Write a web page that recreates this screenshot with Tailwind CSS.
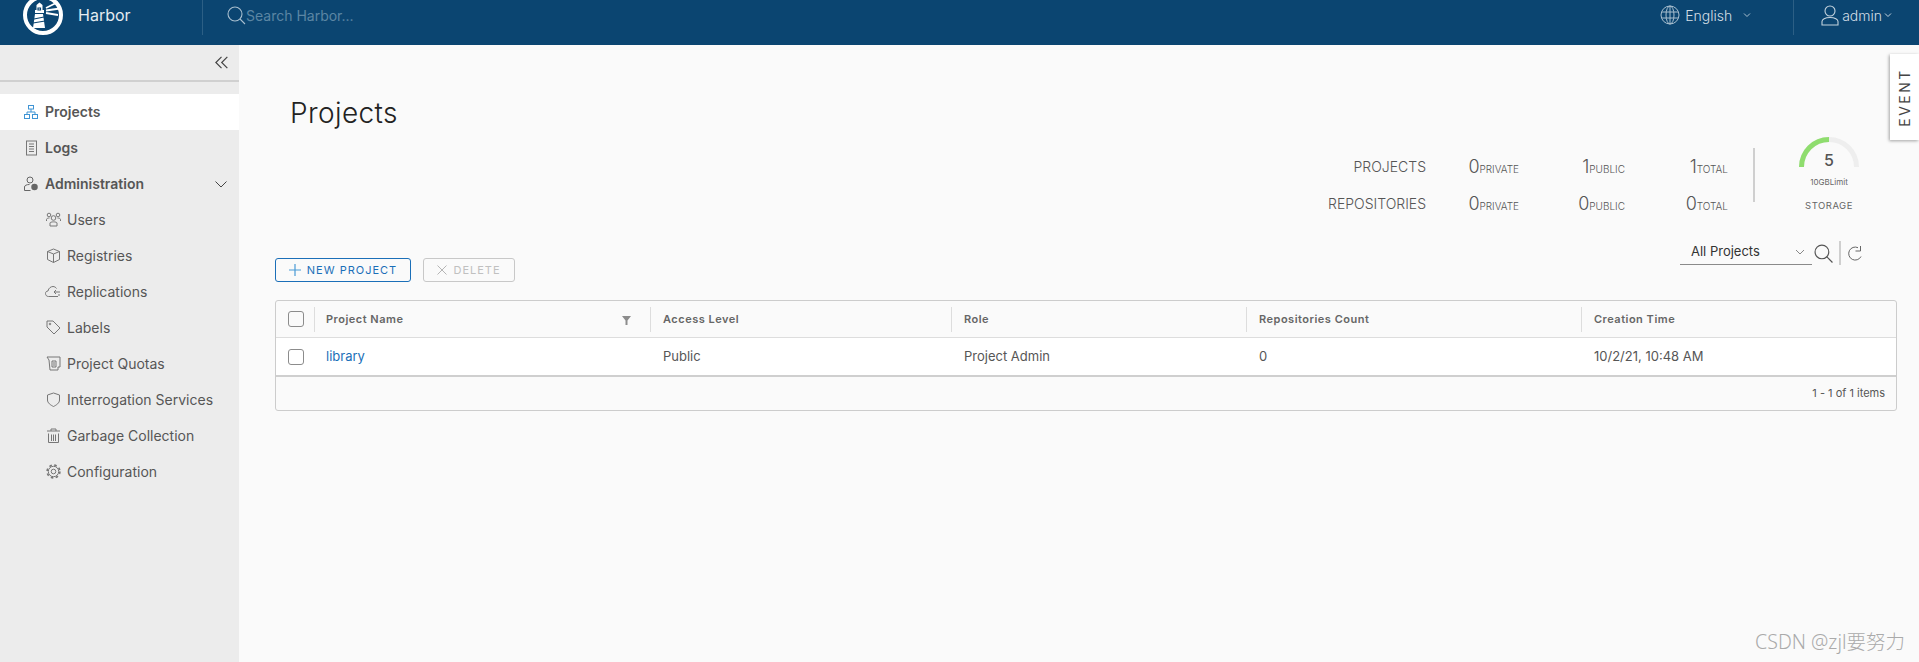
<!DOCTYPE html>
<html lang="en">
<head>
    <meta charset="UTF-8">
    <title>Harbor</title>
    <script src="https://cdn.jsdelivr.net/npm/@tailwindcss/browser@4"></script>
</head>
<body class="h-[662px] overflow-hidden flex flex-col bg-[#fafafa] text-[#565656] font-['Inter','Noto_Sans_CJK_SC',sans-serif]">
    <!-- Top bar -->
    <header class="h-[45px] shrink-0 flex items-center pb-[15px] bg-[#0b4571] text-[#d5dfe6] overflow-hidden">
        <svg class="ml-[23px] shrink-0" width="40" height="40" viewBox="0 0 40 40" fill="none">
            <circle cx="20" cy="20" r="18" stroke="#fff" stroke-width="4"/>
            <path d="M12 15h9v3h-9zM13.500 10l3-2.500 3 2.500v5h-6zM12 19h8l2 14h-12z" fill="#fff"/>
            <path d="M15 13h2.500v2h-2.500zM11 24l10-2M10 28l12-2" stroke="#0b4571" stroke-width="1.200"/>
            <path d="M23 13l12-6M23 15.500l14-2M23 18l12 2" stroke="#fff" stroke-width="1.800"/>
        </svg>
        <span class="ml-[15px] w-[124px] text-[16px] text-[#e4ebf0]">Harbor</span>
        <div class="h-[35px] w-px self-start bg-[#2c5f85]"></div>
        <svg class="ml-[24px] mt-[1px]" width="19" height="19" viewBox="0 0 19 19" fill="none" stroke="#a9bfcf" stroke-width="1.100"><circle cx="8" cy="8" r="7"/><path d="M13 13l5 5"/></svg>
        <span class="text-[14px] text-[#5b86a4]">Search Harbor...</span>
        <div class="ml-auto flex items-center h-full">
            <svg width="20" height="20" viewBox="0 0 20 20" fill="none" stroke="#a9bfcf" stroke-width="1"><circle cx="10" cy="10" r="9"/><ellipse cx="10" cy="10" rx="4" ry="9"/><path d="M10 1v18M1.800 7h16.400M1.800 13h16.400"/></svg>
            <span class="ml-[5px] text-[14px] font-light">English</span>
            <svg class="ml-[11px]" width="8" height="8" viewBox="0 0 8 8" fill="none" stroke="#a9bfcf"><path d="M1 2.500l3 3 3-3"/></svg>
            <div class="ml-[42px] h-[35px] w-px self-start bg-[#2c5f85]"></div>
            <svg class="ml-[27px]" width="18" height="21" viewBox="0 0 18 21" fill="none" stroke="#c4d3de" stroke-width="1.100"><circle cx="9" cy="6" r="5"/><path d="M1 20v-3.500c0-2 3-4 8-4s8 2 8 4V20z"/></svg>
            <span class="ml-[3px] text-[14px] font-light">admin</span>
            <svg class="ml-[2px] mr-[27px]" width="8" height="8" viewBox="0 0 8 8" fill="none" stroke="#c4d3de"><path d="M1 2.500l3 3 3-3"/></svg>
        </div>
    </header>

    <div class="flex flex-1 min-h-0">
        <!-- Sidebar -->
        <aside class="w-[239px] shrink-0 bg-[#ececec] text-[14px]">
            <div class="h-[37px] flex items-center justify-end pr-[11px] border-b-2 border-[#d0d0d0]">
                <svg width="13" height="13" viewBox="0 0 12 12" fill="none" stroke="#444" stroke-width="1.100"><path d="M6 .8L.8 6 6 11.200M11.400.8L6.200 6l5.200 5.200"/></svg>
            </div>
            <nav class="mt-[12px]">
                <a class="h-[36px] flex items-center pl-[24px] pb-[1px] gap-[7px] bg-white font-semibold">
                    <svg width="14" height="14" viewBox="0 0 14 14" fill="none" stroke="#3f94d4" stroke-width="1"><rect x="4.500" y=".5" width="5" height="3.500"/><rect x=".5" y="9.500" width="5" height="4"/><rect x="8.500" y="9.500" width="5" height="4"/><path d="M7 4v3M3 9.500V7h8v2.500"/></svg>
                    Projects
                </a>
                <a class="h-[36px] flex items-center pl-[24px] pb-[1px] gap-[7px] font-semibold">
                    <svg width="14" height="16" viewBox="0 0 14 16" fill="none" stroke="#777" stroke-width="1"><rect x="2.500" y="1" width="10" height="14"/><path d="M5 4h5M5 6.500h5M5 9h5M5 11.500h5"/></svg>
                    Logs
                </a>
                <a class="h-[36px] flex items-center pl-[24px] pb-[1px] pr-[12px] gap-[7px] font-semibold">
                    <svg width="14" height="16" viewBox="0 0 14 16" fill="none" stroke="#666" stroke-width="1"><circle cx="6" cy="4" r="3"/><path d="M.5 14.500V11c0-1.500 2-2.500 5-2.500"/><path d="M.5 14.500h6"/><circle cx="10.500" cy="11" r="2.500" fill="#666" stroke-width="1.500"/></svg>
                    Administration
                    <svg class="ml-auto" width="12" height="12" viewBox="0 0 12 12" fill="none" stroke="#444"><path d="M.5 3.500L6 9l5.500-5.500"/></svg>
                </a>
                <a class="h-[36px] flex items-center pl-[46px] pb-[1px] gap-[6px]">
                    <svg width="15" height="15" viewBox="0 0 15 15" fill="none" stroke="#777" stroke-width="1"><circle cx="7.500" cy="6" r="2.300"/><circle cx="3" cy="3" r="1.800"/><circle cx="12" cy="3" r="1.800"/><path d="M4 14v-3c0-1.500 7-1.500 7 0v3zM.5 9V7.500C.5 6.500 2 6 3.500 6M14.500 9V7.500c0-1-1.500-1.500-3-1.500"/></svg>
                    Users
                </a>
                <a class="h-[36px] flex items-center pl-[46px] pb-[1px] gap-[6px]">
                    <svg width="15" height="15" viewBox="0 0 15 15" fill="none" stroke="#777" stroke-width="1"><path d="M7.500 1l6 2.500v8l-6 3-6-3v-8zM1.500 3.500l6 2.500 6-2.500M7.500 6v8.500"/></svg>
                    Registries
                </a>
                <a class="h-[36px] flex items-center pl-[45px] pb-[1px] gap-[6px]">
                    <svg width="16" height="15" viewBox="0 0 16 15" fill="none" stroke="#777" stroke-width="1"><path d="M13 12.500H3.500C1.500 12.500.5 11 .5 9.500S1.500 7 3 7c.5-3 3-4.500 5-4.500 1.500 0 3 1 3.500 2"/><path d="M15 8H9l2-2M9 8l2 2M14 10v2"/></svg>
                    Replications
                </a>
                <a class="h-[36px] flex items-center pl-[46px] pb-[1px] gap-[6px]">
                    <svg width="15" height="15" viewBox="0 0 15 15" fill="none" stroke="#777" stroke-width="1"><path d="M1 1h6l7 7-6 6-7-7z"/><circle cx="4" cy="4" r=".8"/></svg>
                    Labels
                </a>
                <a class="h-[36px] flex items-center pl-[46px] pb-[1px] gap-[6px]">
                    <svg width="15" height="15" viewBox="0 0 15 15" fill="none" stroke="#777" stroke-width="1"><path d="M1 1h13v10h-2v3H4l-1-10z"/><path d="M6 5h4v6H6zM7 7h2M7 9h2"/></svg>
                    Project Quotas
                </a>
                <a class="h-[36px] flex items-center pl-[46px] pb-[1px] gap-[6px]">
                    <svg width="15" height="15" viewBox="0 0 15 15" fill="none" stroke="#777" stroke-width="1"><path d="M7.500 1l6 2v5c0 3-3 5-6 6.500-3-1.500-6-3.500-6-6.500V3z"/></svg>
                    Interrogation Services
                </a>
                <a class="h-[36px] flex items-center pl-[46px] pb-[1px] gap-[6px]">
                    <svg width="15" height="15" viewBox="0 0 15 15" fill="none" stroke="#777" stroke-width="1"><path d="M1 3h13M5 3V1h5v2M2.500 5.500v9h10v-9M5.500 6.500v6.500M7.500 6.500v6.500M9.500 6.500v6.500"/></svg>
                    Garbage Collection
                </a>
                <a class="h-[36px] flex items-center pl-[46px] pb-[1px] gap-[6px]">
                    <svg width="15" height="15" viewBox="0 0 15 15" fill="none" stroke="#777"><circle cx="7.500" cy="7.500" r="5.200"/><circle cx="7.500" cy="7.500" r="2.300"/><circle cx="7.500" cy="7.500" r="6.400" stroke-width="1.600" stroke-dasharray="2.500 2.530"/></svg>
                    Configuration
                </a>
            </nav>
        </aside>

        <!-- Main content -->
        <main class="relative flex-1 min-w-0 pl-[36px] pr-[22px] pt-[45px]">
            <h1 class="pl-[15px] h-[46px] text-[28px] leading-[46px] font-light tracking-[0.4px] text-[#222]">Projects</h1>

            <!-- Summary -->
            <div class="h-[105px] flex justify-end items-start pr-[28px]">
                <div class="mt-[12px] grid grid-cols-[150px_93px_106px_103px] auto-rows-[37px] items-center justify-items-end font-light text-[#555]">
                    <span class="text-[14px]">PROJECTS</span>
                    <span class="text-[18px]">0<span class="text-[10px]">PRIVATE</span></span>
                    <span class="text-[18px]">1<span class="text-[10px]">PUBLIC</span></span>
                    <span class="text-[18px]">1<span class="text-[10px]">TOTAL</span></span>
                    <span class="text-[14px]">REPOSITORIES</span>
                    <span class="text-[18px]">0<span class="text-[10px]">PRIVATE</span></span>
                    <span class="text-[18px]">0<span class="text-[10px]">PUBLIC</span></span>
                    <span class="text-[18px]">0<span class="text-[10px]">TOTAL</span></span>
                </div>
                <div class="ml-[25px] mt-[12px] h-[54px] w-[2px] bg-[#cfcfcf]"></div>
                <div class="ml-[34px] w-[80px] mt-[1px] flex flex-col items-center text-[#666]">
                    <div class="relative h-[31px] w-[60px]">
                        <svg width="60" height="31" viewBox="0 0 60 31" fill="none" stroke-width="5"><path d="M2.500 30a27.500 27.500 0 0 1 55 0" stroke="#eeeeee"/><path d="M2.500 30A27.500 27.500 0 0 1 30 2.500" stroke="#8fdd6e"/></svg>
                        <span class="absolute inset-x-0 top-[13px] text-center text-[16px] leading-[20px] font-medium text-[#555]">5</span>
                    </div>
                    <span class="mt-[9px] text-[8px] leading-[10px]">10GBLimit</span>
                    <span class="mt-[13px] text-[9.500px] leading-[12px] tracking-[0.5px]">STORAGE</span>
                </div>
            </div>

            <!-- Toolbar -->
            <div class="h-[41px] flex justify-between items-start">
                <div class="mt-[17px] flex gap-[12px] text-[11px] tracking-[1px]">
                    <button class="h-[24px] w-[136px] flex items-center justify-center gap-[6px] rounded-[3px] border border-[#1b6fb8] text-[#1b6fb8]">
                        <svg width="12" height="12" viewBox="0 0 12 12" stroke="#4a9bd6" stroke-width="1.200"><path d="M6 0v12M0 6h12"/></svg>
                        NEW PROJECT
                    </button>
                    <button class="h-[24px] w-[92px] flex items-center justify-center gap-[6px] rounded-[3px] border border-[#c8c8c8] text-[#c0c0c0]">
                        <svg width="10" height="10" viewBox="0 0 10 10" stroke="#b5b5b5"><path d="M.5.5l9 9M9.500.5l-9 9"/></svg>
                        DELETE
                    </button>
                </div>
                <div class="flex items-center pr-[33px] h-[24px]">
                    <div class="w-[132px] h-[23px] pl-[11px] pr-[7px] pb-[1px] flex items-center justify-between border-b border-[#8a8a8a] text-[13px] text-[#333]">
                        All Projects
                        <svg width="10" height="10" viewBox="0 0 10 10" fill="none" stroke="#888"><path d="M1 3l4 4 4-4"/></svg>
                    </div>
                    <svg class="ml-[2px]" width="19" height="19" viewBox="0 0 18 18" fill="none" stroke="#555" stroke-width="1.100"><circle cx="7.500" cy="7.500" r="6.500"/><path d="M12 12l5.500 5.500"/></svg>
                    <div class="ml-[6px] h-[24px] w-[2px] bg-[#cfcfcf]"></div>
                    <svg class="ml-[6px]" width="17" height="17" viewBox="0 0 17 17" fill="none" stroke="#666" stroke-width="1"><path d="M14 11.500A6.500 6.500 0 1 1 11 2.700M13.500 1v5h-5"/></svg>
                </div>
            </div>

            <!-- Projects table -->
            <div class="mt-[18px] h-[111px] rounded-[3px] border border-[#cccccc] text-[13px]">
                <div class="h-[37px] flex items-center border-b border-[#dddddd] text-[11px] font-semibold tracking-[0.5px] text-[#666]">
                    <div class="w-[39px] h-[25px] shrink-0 flex items-center pl-[12px] border-r border-[#dddddd]"><span class="w-[16px] h-[16px] rounded-[3px] border border-[#8c8c8c]"></span></div>
                    <div class="w-[336px] h-[25px] shrink-0 flex items-center pl-[11px] pr-[19px] justify-between border-r border-[#dddddd]">
                        Project Name
                        <svg class="mt-[2px]" width="9" height="9" viewBox="0 0 9 9" fill="#8c8c8c"><path d="M0 0h9L5.500 4.500V9h-2V4.500z"/></svg>
                    </div>
                    <div class="w-[301px] h-[25px] shrink-0 flex items-center pl-[12px] border-r border-[#dddddd]">Access Level</div>
                    <div class="w-[295px] h-[25px] shrink-0 flex items-center pl-[12px] border-r border-[#dddddd]">Role</div>
                    <div class="w-[335px] h-[25px] shrink-0 flex items-center pl-[12px] border-r border-[#dddddd]">Repositories Count</div>
                    <div class="flex-1 pl-[12px]">Creation Time</div>
                </div>
                <div class="h-[39px] flex items-center bg-white border-b-2 border-[#cfcfcf]">
                    <div class="w-[39px] shrink-0 flex items-center pl-[12px]"><span class="w-[16px] h-[16px] rounded-[3px] border border-[#8c8c8c]"></span></div>
                    <div class="w-[336px] shrink-0 pl-[11px] text-[#1b6fb8]">library</div>
                    <div class="w-[301px] shrink-0 pl-[12px]">Public</div>
                    <div class="w-[295px] shrink-0 pl-[12px]">Project Admin</div>
                    <div class="w-[335px] shrink-0 pl-[12px]">0</div>
                    <div class="flex-1 pl-[12px]">10/2/21, 10:48 AM</div>
                </div>
                <div class="h-[33px] flex items-center justify-end pr-[11px] text-[11px]">1 - 1 of 1 items</div>
            </div>

            <!-- Event tab -->
            <div class="absolute top-[9px] right-0 w-[29px] h-[86px] flex items-center justify-center bg-white shadow-[-1px_1px_3px_rgba(0,0,0,0.35)]">
                <span class="-rotate-90 text-[14px] tracking-[2.500px] whitespace-nowrap text-[#444]">EVENT</span>
            </div>

            <!-- Watermark -->
            <span class="absolute right-[14px] bottom-[8px] text-[19.500px] leading-[24px] font-light text-[#aaaaaa] font-['Noto_Sans','Noto_Sans_CJK_SC',sans-serif]">CSDN @zjl要努力</span>
        </main>
    </div>
</body>
</html>
